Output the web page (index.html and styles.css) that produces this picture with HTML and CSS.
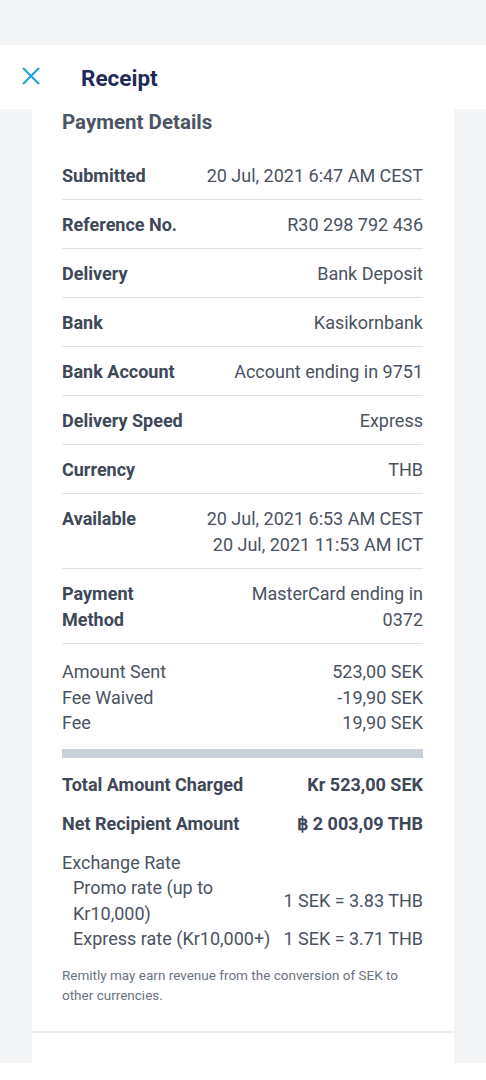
FILE: index.html
```html
<!DOCTYPE html>
<html lang="en">
<head>
    <meta charset="UTF-8">
    <meta name="viewport" content="width=device-width, initial-scale=1.0">
    <title>Receipt</title>
    <link rel="stylesheet" href="styles.css">
</head>
<body>

<div class="top-space"></div>

<!-- Header -->
<div class="header">
    <svg class="close-icon" width="18" height="18" viewBox="0 0 18 18">
        <path d="M1 1 L17 17 M17 1 L1 17" stroke="#27a3d9" stroke-width="2.2" fill="none" />
    </svg>
    <span class="header-title">Receipt</span>
</div>

<div class="card">
    <div class="section-title">Payment Details</div>

    <div class="row"><span class="label">Submitted</span><span class="value">20 Jul, 2021 6:47 AM CEST</span></div>
    <div class="row"><span class="label">Reference No.</span><span class="value">R30 298 792 436</span></div>
    <div class="row"><span class="label">Delivery</span><span class="value">Bank Deposit</span></div>
    <div class="row"><span class="label">Bank</span><span class="value">Kasikornbank</span></div>
    <div class="row"><span class="label">Bank Account</span><span class="value">Account ending in 9751</span></div>
    <div class="row"><span class="label">Delivery Speed</span><span class="value">Express</span></div>
    <div class="row"><span class="label">Currency</span><span class="value">THB</span></div>
    <div class="row tall"><span class="label">Available</span><span class="value">20 Jul, 2021 6:53 AM CEST<br>20 Jul, 2021 11:53 AM ICT</span></div>
    <div class="row tall"><span class="label narrow">Payment Method</span><span class="value">MasterCard ending in<br>0372</span></div>

    <div class="amounts">
        <div class="amount-row"><span>Amount Sent</span><span>523,00 SEK</span></div>
        <div class="amount-row"><span>Fee Waived</span><span>-19,90 SEK</span></div>
        <div class="amount-row"><span>Fee</span><span>19,90 SEK</span></div>
    </div>

    <div class="bar"></div>

    <div class="totals">
        <div class="total-row"><span>Total Amount Charged</span><span>Kr 523,00 SEK</span></div>
        <div class="total-row"><span>Net Recipient Amount</span><span>฿ 2 003,09 THB</span></div>
    </div>

    <div class="exchange">
        <div class="exchange-title">Exchange Rate</div>
        <div class="rate-grid">
            <span class="rate-label">Promo rate (up to Kr10,000)</span>
            <span class="rate-value">1 SEK = 3.83 THB</span>
            <span class="rate-label">Express rate (Kr10,000+)</span>
            <span class="rate-value">1 SEK = 3.71 THB</span>
        </div>
    </div>

    <p class="disclaimer">Remitly may earn revenue from the conversion of SEK to other currencies.</p>
</div>

<div class="card-next"></div>
<div class="footer"></div>

</body>
</html>
```

FILE: styles.css
```css
/* Receipt page */
body {
    font-family: Roboto, "Noto Sans", Arial, sans-serif;
    background-color: #f3f4f6;
    color: #4a5361;
    margin: 0;
    overflow: hidden;
}
.top-space {
    height: 45px;
}
.header {
    background-color: #ffffff;
    height: 64px;
    display: flex;
    align-items: center;
    padding-left: 22px;
}
.close-icon {
    display: block;
    margin-top: -2px;
}
.header-title {
    font-size: 22.5px;
    font-weight: bold;
    color: #1f2b5b;
    margin-left: 41px;
    margin-top: 2px;
}
.card {
    background-color: #ffffff;
    margin: 0 32px;
    padding: 0 31px 26px 30px;
    border-bottom: 2px solid #ebedf0;
}
.section-title {
    font-size: 20.5px;
    font-weight: bold;
    color: #4b5563;
    line-height: 26px;
    margin-bottom: 16px;
}
.row {
    display: flex;
    justify-content: space-between;
    align-items: flex-start;
    font-size: 18px;
    line-height: 25px;
    padding: 12px 0 11px;
    border-bottom: 1px solid #dfe2e7;
}
.row.tall {
    line-height: 25.5px;
}
.label {
    font-weight: bold;
    color: #3e4858;
}
.label.narrow {
    width: 90px;
}
.value {
    text-align: right;
    color: #4a5260;
}
.amounts {
    padding-top: 15px;
    font-size: 18px;
    line-height: 25.5px;
}
.amount-row {
    display: flex;
    justify-content: space-between;
}
.bar {
    height: 9px;
    background-color: #c9d1da;
    margin-top: 13px;
}
.totals {
    padding-top: 14px;
}
.total-row {
    display: flex;
    justify-content: space-between;
    font-size: 18px;
    font-weight: bold;
    line-height: 25px;
    color: #3e4858;
    margin-bottom: 14px;
}
.exchange {
    font-size: 18px;
    line-height: 25.5px;
}
.rate-grid {
    display: grid;
    grid-template-columns: 1fr auto;
    column-gap: 12px;
    align-items: center;
    padding-left: 11px;
}
.rate-value {
    text-align: right;
}
.disclaimer {
    font-size: 13.5px;
    line-height: 20px;
    color: #6b7380;
    margin: 13px 0 0;
}
.card-next {
    background-color: #ffffff;
    margin: 0 32px;
    height: 30px;
}
.footer {
    background-color: #ffffff;
    height: 40px;
}
```
